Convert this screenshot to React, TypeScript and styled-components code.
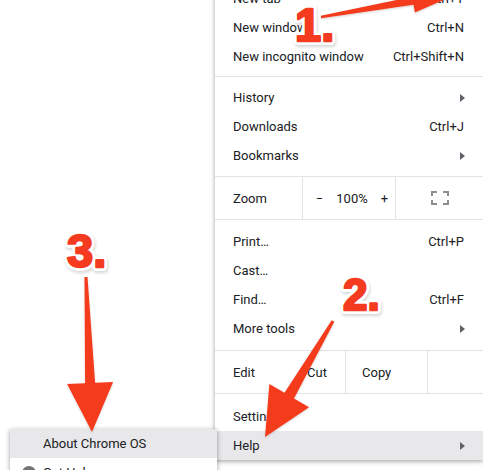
import React from "react";
import styled, { createGlobalStyle } from "styled-components";

const GlobalStyle = createGlobalStyle`
  html, body { margin: 0; padding: 0; background: #ffffff; }
  body { font-family: Roboto, "Noto Sans", Arial, sans-serif; overflow: hidden; }
`;

const TEXT = "#202124";
const RED = "#f43b1f";
const HOVER = "#e8e8ea";

const Page = styled.div`
  position: relative;
  width: 483px;
  height: 470px;
  overflow: hidden;
  display: flex;
  justify-content: flex-end;
  align-items: flex-start;
  background: #fff;
`;

const Menu = styled.div`
  width: 268px;
  flex-shrink: 0;
  margin-top: -16px;
  background: #fff;
  box-shadow: 0 1px 4px rgba(0, 0, 0, 0.28), 0 2px 6px rgba(0, 0, 0, 0.12);
  display: flex;
  flex-direction: column;
  font-size: 13px;
  color: ${TEXT};
`;

const Group = styled.div<{ $pt: number; $pb: number }>`
  display: flex;
  flex-direction: column;
  padding: ${(p) => p.$pt}px 0 ${(p) => p.$pb}px;
`;

const Divider = styled.div`
  height: 1px;
  background: #e3e3e3;
`;

const Item = styled.div<{ $active?: boolean }>`
  height: 29px;
  display: flex;
  align-items: center;
  justify-content: space-between;
  padding: 0 19px 0 18px;
  background: ${(p) => (p.$active ? HOVER : "transparent")};
`;

const Shortcut = styled.span`
  color: ${TEXT};
`;

const SubArrow = styled.span`
  width: 0;
  height: 0;
  margin-right: -1px;
  border-left: 5px solid #5f6368;
  border-top: 4px solid transparent;
  border-bottom: 4px solid transparent;
`;

const ButtonRow = styled.div<{ $cols: string }>`
  height: 42px;
  display: grid;
  grid-template-columns: ${(p) => p.$cols};
`;

const Cell = styled.div<{ $divider?: boolean; $center?: boolean; $pl?: number }>`
  display: flex;
  align-items: center;
  justify-content: ${(p) => (p.$center ? "center" : "flex-start")};
  padding-left: ${(p) => (p.$center ? 0 : p.$pl ?? 18)}px;
  border-left: ${(p) => (p.$divider ? "1px solid #e3e3e3" : "none")};
`;

const ZoomControls = styled.div`
  display: flex;
  align-items: center;
  gap: 13px;
  margin-left: 6px;
`;

const Sub = styled.div`
  position: absolute;
  left: 10px;
  top: 429px;
  width: 207px;
  background: #fff;
  box-shadow: 0 1px 4px rgba(0, 0, 0, 0.28), 0 2px 6px rgba(0, 0, 0, 0.12);
  font-size: 13px;
  color: ${TEXT};
  display: flex;
  flex-direction: column;
`;

const SubItem = styled.div<{ $active?: boolean }>`
  height: 29px;
  display: flex;
  align-items: center;
  gap: 7px;
  padding-left: 12px;
  background: ${(p) => (p.$active ? HOVER : "transparent")};
`;

const SubIcon = styled.span<{ $hidden?: boolean }>`
  width: 14px;
  height: 14px;
  border-radius: 50%;
  background: ${(p) => (p.$hidden ? "transparent" : "#757575")};
  flex-shrink: 0;
`;

const Overlay = styled.svg`
  position: absolute;
  left: 0;
  top: 0;
  width: 483px;
  height: 470px;
  pointer-events: none;
  overflow: visible;
`;

function arrowPoints(
  tx: number,
  ty: number,
  px: number,
  py: number,
  L: number,
  h: number,
  w0: number,
  w1: number
) {
  const dx = px - tx;
  const dy = py - ty;
  const len = Math.hypot(dx, dy);
  const ux = dx / len;
  const uy = dy / len;
  const nx = -uy;
  const ny = ux;
  const bx = px - ux * L;
  const by = py - uy * L;
  const pts = [
    [tx + nx * w0, ty + ny * w0],
    [bx + nx * w1, by + ny * w1],
    [bx + nx * h, by + ny * h],
    [px, py],
    [bx - nx * h, by - ny * h],
    [bx - nx * w1, by - ny * w1],
    [tx - nx * w0, ty - ny * w0],
  ];
  return pts.map((p) => `${p[0].toFixed(1)},${p[1].toFixed(1)}`).join(" ");
}

const Num = ({ x, y, size, children }: { x: number; y: number; size: number; children: string }) => (
  <g fontFamily='"Liberation Sans", Arial, sans-serif' fontWeight={700} fontSize={size}>
    <text x={x + 1} y={y + 2} fill="#999" stroke="#999" strokeWidth={8} strokeLinejoin="round" opacity={0.4} filter="url(#blur)">
      {children}
    </text>
    <text x={x} y={y} fill="#fff" stroke="#fff" strokeWidth={8} strokeLinejoin="round">
      {children}
    </text>
    <text x={x} y={y} fill={RED} stroke={RED} strokeWidth={2.4} strokeLinejoin="round">
      {children}
    </text>
  </g>
);

const FullscreenIcon = () => (
  <svg width="18" height="14" viewBox="0 0 18 14">
    <path
      d="M1 5V1h5M12 1h5v4M17 9v4h-5M6 13H1V9"
      fill="none"
      stroke="#8a8e92"
      strokeWidth="2"
    />
  </svg>
);

export default function App() {
  return (
    <>
      <GlobalStyle />
      <Page>
        <Menu>
          <Group $pt={0} $pb={5}>
            <Item>
              <span>New tab</span>
              <Shortcut>Ctrl+T</Shortcut>
            </Item>
            <Item>
              <span>New window</span>
              <Shortcut>Ctrl+N</Shortcut>
            </Item>
            <Item>
              <span>New incognito window</span>
              <Shortcut>Ctrl+Shift+N</Shortcut>
            </Item>
          </Group>
          <Divider />
          <Group $pt={6} $pb={6}>
            <Item>
              <span>History</span>
              <SubArrow />
            </Item>
            <Item>
              <span>Downloads</span>
              <Shortcut>Ctrl+J</Shortcut>
            </Item>
            <Item>
              <span>Bookmarks</span>
              <SubArrow />
            </Item>
          </Group>
          <Divider />
          <ButtonRow $cols="87px 93px 1fr">
            <Cell>Zoom</Cell>
            <Cell $divider $center>
              <ZoomControls>
                <span>−</span>
                <span>100%</span>
                <span>+</span>
              </ZoomControls>
            </Cell>
            <Cell $divider $center>
              <FullscreenIcon />
            </Cell>
          </ButtonRow>
          <Divider />
          <Group $pt={7} $pb={7}>
            <Item>
              <span>Print…</span>
              <Shortcut>Ctrl+P</Shortcut>
            </Item>
            <Item>
              <span>Cast…</span>
            </Item>
            <Item>
              <span>Find…</span>
              <Shortcut>Ctrl+F</Shortcut>
            </Item>
            <Item>
              <span>More tools</span>
              <SubArrow />
            </Item>
          </Group>
          <Divider />
          <ButtonRow $cols="75px 55px 82px 1fr">
            <Cell>Edit</Cell>
            <Cell $pl={17}>Cut</Cell>
            <Cell $divider $pl={16}>Copy</Cell>
            <Cell $divider />
          </ButtonRow>
          <Divider />
          <Group $pt={8} $pb={0}>
            <Item>
              <span>Settings</span>
            </Item>
            <Item $active>
              <span>Help</span>
              <SubArrow />
            </Item>
          </Group>
        </Menu>

        <Sub>
          <SubItem $active>
            <SubIcon $hidden />
            <span>About Chrome OS</span>
          </SubItem>
          <SubItem>
            <SubIcon />
            <span>Get Help</span>
          </SubItem>
        </Sub>

        <Overlay viewBox="0 0 483 470">
          <defs>
            <filter id="blur" x="-20%" y="-20%" width="140%" height="140%">
              <feGaussianBlur stdDeviation="1.5" />
            </filter>
            <filter id="ashadow" x="-20%" y="-20%" width="140%" height="140%">
              <feDropShadow dx="0" dy="1" stdDeviation="1" floodColor="#000" floodOpacity="0.18" />
            </filter>
          </defs>
          <g fill={RED} filter="url(#ashadow)">
            <polygon points={arrowPoints(321, 17, 462, -8, 50, 12, 1.2, 4)} />
            <polygon points={arrowPoints(333, 321, 265, 437, 48, 23, 1.5, 5.5)} />
            <polygon points={arrowPoints(86, 277, 92, 432, 49, 23, 1.5, 5)} />
          </g>
          <Num x={295} y={41} size={47}>1.</Num>
          <Num x={343} y={310} size={44}>2.</Num>
          <Num x={67} y={267} size={47}>3.</Num>
        </Overlay>
      </Page>
    </>
  );
}
